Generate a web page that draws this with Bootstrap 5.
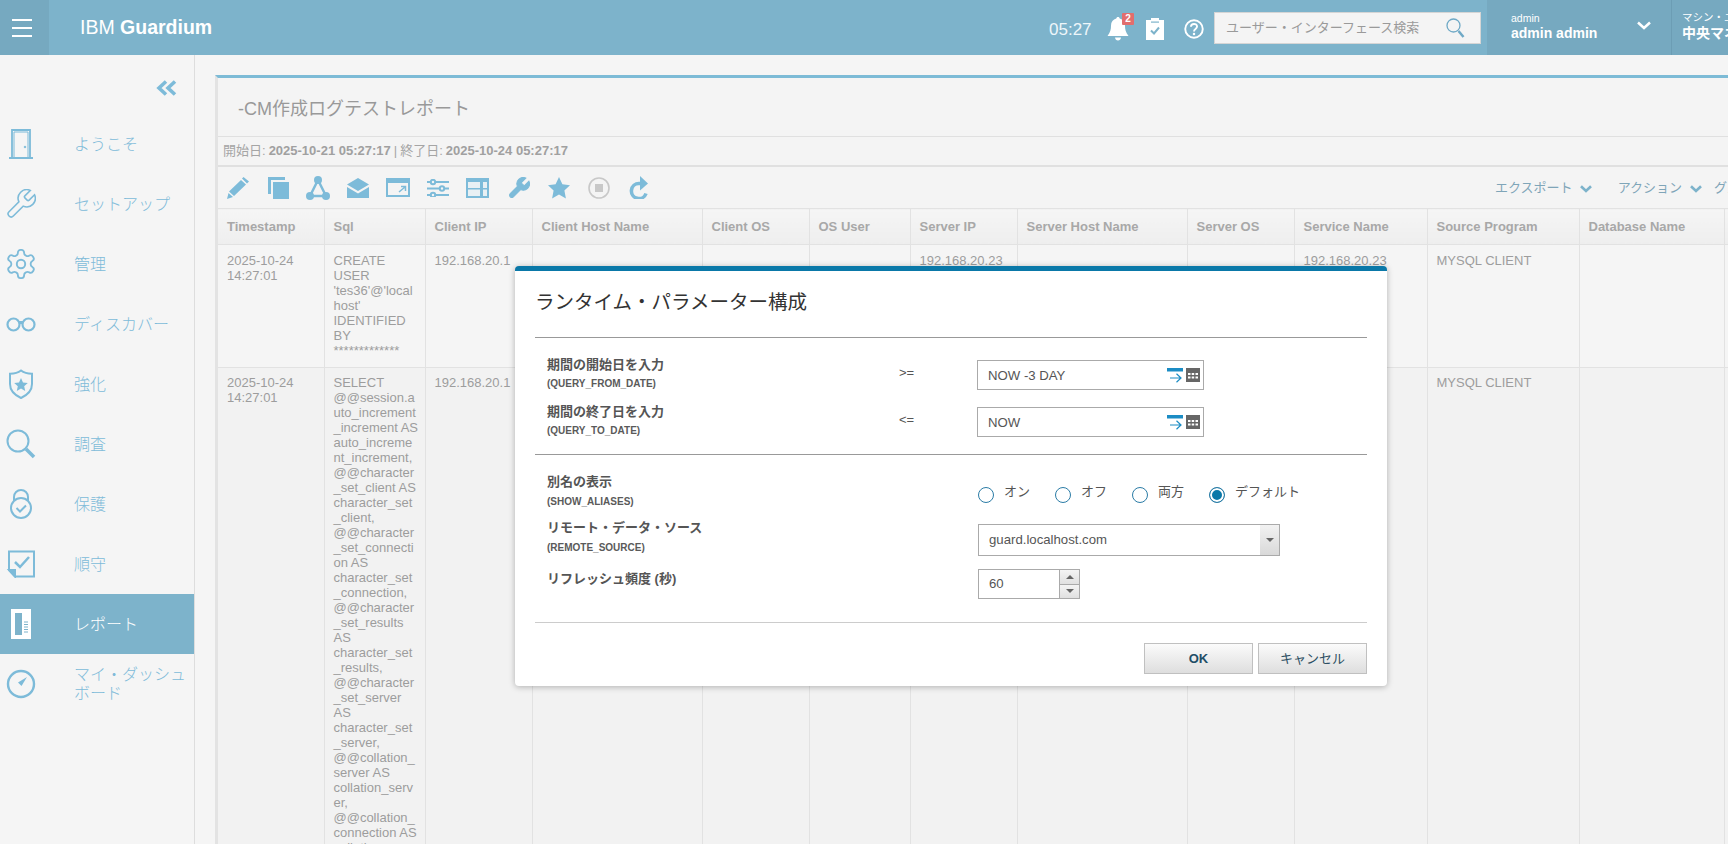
<!DOCTYPE html>
<html lang="ja">
<head>
<meta charset="utf-8">
<title>IBM Guardium</title>
<link href="https://cdn.jsdelivr.net/npm/bootstrap@5.3.0/dist/css/bootstrap.min.css" rel="stylesheet">
<style>
html,body{height:100%;overflow:hidden}
body{font-family:"Liberation Sans","Noto Sans CJK JP",sans-serif;background:#f5f5f5;font-size:13px;color:#999;position:relative;width:1728px;height:844px}
.gd-top{height:55px;background:#7db3cb;padding:0;flex-wrap:nowrap;color:#fff;justify-content:flex-start}
.gd-burger{width:49px;height:55px;background:#76a9c0;border:0;padding:0 12px;display:flex;flex-direction:column;justify-content:center;gap:6px}
.gd-burger span{display:block;height:2px;width:20px;background:#fff}
.gd-brand{margin-left:31px;font-size:19.500px;color:#fff;padding:0;line-height:1}
.gd-clock{margin-left:auto;font-size:17px;width:58px;padding-top:5px;color:#eef6fa}
.gd-bell{position:relative;width:39px;height:24px;margin-top:3px}
.gd-num{position:absolute;left:15px;top:-4px;width:12px;height:12px;background:#e26d6d;color:#fff;font-size:10px;font-weight:700;line-height:12px;text-align:center;border-radius:1px;padding:0}
.gd-clip{margin:3px 20px 0 0}
.gd-help{margin-top:3px}
.gd-search{width:267px;height:32px;margin-left:10px;background:#f4f4f4;border:1px solid #d5d5d5;border-radius:0;padding:0 15px 0 11px;display:flex;align-items:center;justify-content:space-between;color:#9a9a9a;font-size:13px;box-shadow:none}
.gd-user{width:185px;height:55px;margin-left:6px;background:#76a9c0;border-right:1px solid #6c9db4;padding:13px 0 0 24px;position:relative;line-height:1;flex:none}
.gd-user small{display:block;font-size:10.500px;color:#fff}
.gd-user b{display:block;font-size:14px;margin-top:2px;font-weight:700}
.gd-user svg{position:absolute;left:150px;top:21px}
.gd-mach{background:#76a9c0;height:55px;width:56px;flex:none;padding:12px 0 0 10px;white-space:nowrap;overflow:hidden;line-height:1}
.gd-mach small{display:block;font-size:10.500px}
.gd-mach b{display:block;font-size:14px;margin-top:3px}
.gd-main{height:789px;overflow:hidden}
.gd-side{width:195px;flex:none;border-right:1px solid #ddd;background:#f5f5f5;height:789px}
.gd-back{height:59px;padding:25px 17px 0 0;text-align:right;line-height:1}
.gd-side .nav-link{height:60px;padding:0;display:flex;align-items:center;color:#80bbd9;font-size:16px;line-height:19px;font-weight:300}
.gd-side .nav-link.active{background:#7db3cb;color:#fff}
.gd-ico{width:74px;flex:none;padding-left:6px;display:flex}
.gd-content{flex:1;padding:20px 0 0 20px;overflow:hidden;background:#f5f5f5}
.gd-panel{width:1600px;border-top:3px solid #7dbbd6;border-left:3px solid #e3e3e3;background:#f4f4f4;height:790px}
.gd-title{height:59px;border-bottom:1px solid #e0e0e0;padding:4px 0 0 20px;margin:0;font-size:18px;font-weight:400;color:#999;display:flex;align-items:center;line-height:1}
.gd-dates{height:30px;border-bottom:2px solid #e0e0e0;padding:0 0 0 5px;font-size:13px;color:#a5a5a5;display:flex;align-items:center;gap:3px}
.gd-dates b{color:#a0a0a0}
.gd-tools{height:41px;display:flex;align-items:center;position:relative;padding-left:9px}
.gd-tools>svg{flex:none}
.gd-menu{margin-left:847px;display:flex;gap:0;white-space:nowrap;font-size:13px;color:#7fa5b8;align-items:center}
.gd-grid{table-layout:fixed;width:1640px;margin:0;--bs-table-bg:transparent;--bs-table-color:#9d9d9d;--bs-table-border-color:#e2e2e2;font-size:13px;line-height:15px;border-color:#e2e2e2}
.gd-grid th{height:36px;padding:0 6px 0 9px;font-weight:700;color:#a8a8a8;background:linear-gradient(#f5f5f5,#eeeeee);vertical-align:middle;border-width:1px 1px 1px 0}
.gd-grid td{padding:8px 6px 8px 9px;color:#9d9d9d;overflow-wrap:anywhere;border-width:0 1px 0 0;vertical-align:top}
.gd-grid tr.gd-r1 td{height:123px;background:#f5f5f5}
.gd-grid tr.gd-r2 td{background:#f2f2f2;padding-top:7px}
.gd-modal{position:absolute;left:515px;top:266px;width:872px;height:420px;background:#fff;border-top:5px solid #0a78a8;border-radius:4px;box-shadow:0 1px 6px rgba(0,0,0,.28);padding:0 20px;color:#555}
.gd-mh{height:67px;border-bottom:1px solid #999;margin:0;font-size:19.500px;font-weight:400;color:#333;display:flex;align-items:center;padding:0 0 3px 0;line-height:1}
.gd-sec1{height:117px;border-bottom:1px solid #999;padding-top:17px}
.gd-sec2{height:168px;border-bottom:1px solid #ccc;padding-top:18px}
.gd-row{display:flex;align-items:flex-start}
.gd-row.gd-a{height:47px}
.gd-lab{width:442px;flex:none;padding-left:12px;font-weight:700;font-size:13px;line-height:18px;color:#555}
.gd-lab small{display:block;font-size:10px;line-height:14px;margin-top:4px;font-weight:700;color:#5a5a5a}
.gd-sec1 .gd-lab{width:364px;padding-top:1px}
.gd-sec1 .gd-lab small{margin-top:3px}
.gd-op{width:78px;flex:none;padding-top:9px;line-height:18px;font-size:13px;color:#555}
.gd-date{width:227px;height:30px;margin-top:5px;border:1.500px solid #aaa;border-radius:0;padding:1px 3px 0 10px;display:flex;align-items:center;justify-content:space-between;font-size:13.200px;color:#555;background:#fff;line-height:1}
.gd-dt{display:flex;gap:3px;align-items:center;margin-top:-1px}
.gd-radios{display:flex;margin-top:14px}
.gd-radios .form-check{width:77px;padding:0;margin:0;min-height:0;display:flex;align-items:flex-start;gap:10px;white-space:nowrap;font-size:13px;color:#555}
.gd-radios .form-check-input{width:16px;height:16px;margin:0;float:none;border:1.500px solid #2b7ca6;background:#fff;flex:none}
.gd-radios .form-check-input:checked{background-image:none;background-color:#0a78a8;border-color:#2b7ca6;box-shadow:inset 0 0 0 2px #fff}
.gd-radios .form-check-label{line-height:14px;margin-top:-2px}
.gd-sec2 .gd-lab{width:443px}
.gd-combo{width:302px;height:32px;margin-top:5px;border:1.500px solid #aaa;display:flex;align-items:stretch;font-size:13.200px;color:#555}
.gd-combo>div:first-child{flex:1;padding-left:10px;display:flex;align-items:center}
.gd-caret{width:19px;background:linear-gradient(#f2f2f2,#d9d9d9);display:flex;align-items:center;justify-content:center}
.gd-spin{width:102px;height:30px;border:1.500px solid #aaa;display:flex;font-size:13.200px;color:#555}
.gd-spin>div:first-child{flex:1;padding-left:10px;display:flex;align-items:center}
.gd-arrows{width:20px;border-left:1px solid #aaa;display:flex;flex-direction:column}
.gd-arrows span{flex:1;background:linear-gradient(#f4f4f4,#e0e0e0);display:flex;align-items:center;justify-content:center}
.gd-arrows span+span{border-top:1px solid #aaa}
.gd-foot{padding-top:20px;gap:5px}
.gd-btn{width:109px;height:31px;padding:0;border:1.500px solid #c0c0c0;border-radius:0;background:linear-gradient(#fbfbfb,#dedede);font-size:13px;color:#2d4f63;line-height:1}
.gd-btn.gd-ok{font-weight:700;color:#1f4e66}
.gd-rc{height:52px}
.gd-rb{height:51px;padding-top:1px}
.gd-rl{padding-top:1px}
</style>
</head>
<body>
<nav class="navbar gd-top d-flex align-items-center">
  <button class="gd-burger" type="button" aria-label="menu"><span></span><span></span><span></span></button>
  <a class="navbar-brand gd-brand" href="#">IBM <b>Guardium</b></a>
  <div class="gd-clock">05:27</div>
  <div class="gd-bell">
    <svg width="22" height="24" viewBox="0 0 22 24"><path fill="#fff" d="M11 0c1 0 1.600.7 1.700 1.600C16 2.400 18 5 18 8.500c0 4 .6 6.800 3.500 10.500H.5C3.400 15.300 4 12.500 4 8.500 4 5 6 2.400 9.300 1.600 9.400.7 10 0 11 0zM8 20.500h6c-.2 2-1.500 3-3 3s-2.800-1-3-3z"/></svg>
    <span class="badge gd-num">2</span>
  </div>
  <svg class="gd-clip" width="18" height="22" viewBox="0 0 18 22"><path fill="#fff" d="M0 2h5V0h8v2h5v20H0z"/><path fill="#7db3cb" d="M5 3.500h8v1.200H5z"/><path fill="none" stroke="#7db3cb" stroke-width="2" d="M5 12.500l3 3 5-6"/></svg>
  <svg class="gd-help" width="20" height="20" viewBox="0 0 21 21"><circle cx="10.500" cy="10.500" r="9.200" fill="none" stroke="#fff" stroke-width="2"/><path fill="none" stroke="#fff" stroke-width="2" d="M7.300 8.200c0-4 6.400-4 6.400-.2 0 2.500-3.200 2.400-3.200 5"/><circle cx="10.500" cy="15.700" r="1.300" fill="#fff"/></svg>
  <div class="form-control gd-search">ユーザー・インターフェース検索
    <svg width="19" height="20" viewBox="0 0 19 20"><circle cx="7.500" cy="7.500" r="6.500" fill="none" stroke="#6fa9c6" stroke-width="1.300"/><path stroke="#6fa9c6" stroke-width="2.500" d="M12.500 13l5 6"/></svg>
  </div>
  <div class="gd-user"><small>admin</small><b>admin admin</b>
    <svg width="14" height="9" viewBox="0 0 14 9"><path fill="none" stroke="#fff" stroke-width="2.500" d="M1 1.500l6 5.500 6-5.500"/></svg>
  </div>
  <div class="gd-mach"><small>マシン・ユーザー</small><b>中央マネージャー</b></div>
</nav>

<div class="d-flex gd-main">
  <aside class="gd-side">
    <div class="gd-back"><svg width="21" height="16" viewBox="0 0 21 16"><path fill="none" stroke="#7dbbd9" stroke-width="3.600" d="M10 1.500L3 8l7 6.500M19 1.500L12 8l7 6.500"/></svg></div>
    <ul class="nav flex-column">
      <li class="nav-item"><a class="nav-link" href="#"><span class="gd-ico"><svg width="30" height="30" viewBox="0 0 30 30" fill="none" stroke="#7dbbd9"><path stroke-width="1.800" d="M6 29V1h18v28"/><path d="M8 28V3h14v25"/><path stroke-width="2" d="M3 29h24"/><circle cx="19" cy="18" r=".8" fill="#7dbbd9"/></svg></span>ようこそ</a></li>
      <li class="nav-item"><a class="nav-link" href="#"><span class="gd-ico"><svg width="30" height="30" viewBox="1.500 1.500 21 21" fill="none" stroke="#7dbbd9" stroke-width="1.100"><path d="M14.700 6.300a1 1 0 0 0 0 1.400l1.600 1.600a1 1 0 0 0 1.400 0l3.770-3.770a6 6 0 0 1-7.940 7.940l-6.910 6.910a2.120 2.120 0 0 1-3-3l6.910-6.910a6 6 0 0 1 7.940-7.940l-3.760 3.760z"/></svg></span>セットアップ</a></li>
      <li class="nav-item"><a class="nav-link" href="#"><span class="gd-ico"><svg width="30" height="30" viewBox="2 2 20 20" fill="none" stroke="#7dbbd9" stroke-width="1.300"><path d="M12.220 2h-.44a2 2 0 0 0-2 2v.18a2 2 0 0 1-1 1.730l-.43.25a2 2 0 0 1-2 0l-.15-.08a2 2 0 0 0-2.730.73l-.22.38a2 2 0 0 0 .73 2.730l.15.1a2 2 0 0 1 1 1.720v.51a2 2 0 0 1-1 1.740l-.15.09a2 2 0 0 0-.73 2.730l.22.38a2 2 0 0 0 2.730.73l.15-.08a2 2 0 0 1 2 0l.43.25a2 2 0 0 1 1 1.730V20a2 2 0 0 0 2 2h.44a2 2 0 0 0 2-2v-.18a2 2 0 0 1 1-1.730l.43-.25a2 2 0 0 1 2 0l.15.08a2 2 0 0 0 2.730-.73l.22-.39a2 2 0 0 0-.73-2.730l-.15-.08a2 2 0 0 1-1-1.740v-.5a2 2 0 0 1 1-1.740l.15-.09a2 2 0 0 0 .73-2.730l-.22-.38a2 2 0 0 0-2.730-.73l-.15.08a2 2 0 0 1-2 0l-.43-.25a2 2 0 0 1-1-1.730V4a2 2 0 0 0-2-2z" transform="translate(12 12) scale(.94) translate(-12 -12)"/><circle cx="12" cy="12" r="2.800"/></svg></span>管理</a></li>
      <li class="nav-item"><a class="nav-link" href="#"><span class="gd-ico"><svg width="30" height="16" viewBox="0 0 30 16" fill="none" stroke="#7dbbd9" stroke-width="2.200"><circle cx="7.500" cy="8.500" r="6"/><circle cx="22.500" cy="8.500" r="6"/><path stroke-width="3" d="M13 6.500h4"/></svg></span>ディスカバー</a></li>
      <li class="nav-item"><a class="nav-link" href="#"><span class="gd-ico"><svg width="30" height="30" viewBox="0 0 30 30"><path fill="none" stroke="#7dbbd9" stroke-width="2" d="M15 1.500c2.500 2 6.500 3.200 11 3.200V15c0 6-4.500 11-11 14C8.500 26 4 21 4 15V4.700c4.500 0 8.500-1.200 11-3.200z"/><path fill="#7dbbd9" d="M15 9l2 4.500 4.800.5-3.600 3.200 1 4.800L15 19.500 10.800 22l1-4.800L8.200 14l4.800-.5z"/></svg></span>強化</a></li>
      <li class="nav-item"><a class="nav-link" href="#"><span class="gd-ico"><svg width="30" height="30" viewBox="0 0 30 30" fill="none" stroke="#7dbbd9"><circle cx="12" cy="12" r="10.500" stroke-width="2"/><path stroke-width="3.500" d="M20 20l8 8"/></svg></span>調査</a></li>
      <li class="nav-item"><a class="nav-link" href="#"><span class="gd-ico"><svg width="30" height="30" viewBox="0 0 30 30" fill="none" stroke="#7dbbd9" stroke-width="2"><circle cx="15" cy="19" r="10"/><path d="M8 12V8a7 7 0 0 1 14 0v4"/><path d="M10.500 19l3.500 3.500 6-6"/></svg></span>保護</a></li>
      <li class="nav-item"><a class="nav-link" href="#"><span class="gd-ico"><svg width="30" height="28" viewBox="0 0 30 28" fill="none" stroke="#7dbbd9" stroke-width="2"><path d="M3 20V1.500h25v25H9z"/><path d="M3 20h6v6.500z" fill="#7dbbd9"/><path stroke-width="2.500" d="M9 12l5 5 9-10"/></svg></span>順守</a></li>
      <li class="nav-item"><a class="nav-link active" href="#"><span class="gd-ico"><svg width="30" height="30" viewBox="0 0 30 30"><path fill="#fff" d="M5 0h20v30H5z"/><path fill="#7db3cb" d="M9 4h7v22H9z"/><path stroke="#7db3cb" stroke-width="1" d="M18 13h4M18 15.500h4M18 18h4M18 20.500h4M18 23h4"/></svg></span>レポート</a></li>
      <li class="nav-item"><a class="nav-link" href="#"><span class="gd-ico"><svg width="30" height="30" viewBox="0 0 30 30"><circle cx="15" cy="15" r="13" fill="none" stroke="#7dbbd9" stroke-width="2.400"/><path fill="#7dbbd9" d="M21 8l-5.500 9-3.500-3.500z"/></svg></span>マイ・ダッシュボード</a></li>
    </ul>
  </aside>

  <main class="gd-content">
    <section class="gd-panel">
      <h1 class="gd-title">-CM作成ログテストレポート</h1>
      <div class="gd-dates"><span>開始日:</span><b>2025-10-21 05:27:17</b><span>|</span><span>終了日:</span><b>2025-10-24 05:27:17</b></div>
      <div class="gd-tools">
        <svg width="22" height="22" viewBox="0 0 22 22" style="margin-right:19px"><path fill="#7dbbd9" d="M16.500 0L22 4.500l-2 2L15 1.500zM14 3l5 4.500L7 19l-5-4.500zM1.500 16l4.500 4-6 2z"/></svg>
        <svg width="21" height="22" viewBox="0 0 21 22" style="margin-right:17px"><path fill="#7dbbd9" d="M4 0h13v3H3v14H0V0z"/><path fill="#7dbbd9" d="M5 5h16v17H5z"/></svg>
        <svg width="24" height="24" viewBox="0 0 24 24" style="margin-right:17px"><path fill="none" stroke="#7dbbd9" stroke-width="2.500" d="M12 4L4 20h16z"/><circle cx="12" cy="4" r="4" fill="#7dbbd9"/><circle cx="4" cy="20" r="4" fill="#7dbbd9"/><circle cx="20" cy="20" r="4" fill="#7dbbd9"/></svg>
        <svg width="22" height="20" viewBox="0 0 22 20" style="margin-right:17px"><path fill="#7dbbd9" d="M11 0l11 6.500L11 13 0 6.500zM0 9l11 6.500L22 9v11H0z"/></svg>
        <svg width="24" height="19" viewBox="0 0 24 19" style="margin-right:17px"><path fill="none" stroke="#7dbbd9" stroke-width="2" d="M1 1h22v17H1z"/><path fill="#7dbbd9" d="M0 0h24v5H0z"/><path fill="none" stroke="#7dbbd9" stroke-width="1.500" d="M13 14l6-5M15 8.500h4.500V13"/></svg>
        <svg width="22" height="18" viewBox="0 0 22 18" style="margin-right:17px" fill="none" stroke="#7dbbd9" stroke-width="2"><path d="M0 3h22M0 9.500h22M0 16h22"/><circle cx="6" cy="3" r="2.200" fill="#f4f4f4"/><circle cx="15" cy="9.500" r="2.200" fill="#f4f4f4"/><circle cx="6" cy="16" r="2.200" fill="#f4f4f4"/></svg>
        <svg width="23" height="20" viewBox="0 0 23 20" style="margin-right:19px"><path fill="#7dbbd9" d="M0 0h23v20H0z"/><path fill="#e8f0f4" d="M2 4h12v6H2zM2 11.500h12V18H2zM17 4h4v6h-4zM17 11.500h4V18h-4z"/></svg>
        <svg width="22" height="22" viewBox="1.500 1.500 21 21" style="margin-right:18px"><path fill="#7dbbd9" stroke="#7dbbd9" stroke-width="1" d="M14.700 6.300a1 1 0 0 0 0 1.400l1.600 1.600a1 1 0 0 0 1.400 0l3.770-3.770a6 6 0 0 1-7.940 7.940l-6.910 6.910a2.120 2.120 0 0 1-3-3l6.910-6.910a6 6 0 0 1 7.940-7.940l-3.760 3.760z"/></svg>
        <svg width="22" height="22" viewBox="0 0 22 22" style="margin-right:18px"><path fill="#7dbbd9" d="M11 0l3.400 7.300 7.600.9-5.600 5.300 1.500 7.900L11 17.500 4.100 21.400l1.500-7.900L0 8.200l7.600-.9z"/></svg>
        <svg width="22" height="22" viewBox="0 0 22 22" style="margin-right:19px"><circle cx="11" cy="11" r="10" fill="none" stroke="#c8c8c8" stroke-width="1.600"/><path fill="#c8c8c8" d="M7 7h8v8H7z"/></svg>
        <svg width="19" height="23" viewBox="0 0 19 23"><path fill="none" stroke="#7dbbd9" stroke-width="3.600" d="M14 7.500H10a7.500 7.500 0 1 0 7 10"/><path fill="#7dbbd9" d="M11 0l8 7.500-8 7z"/></svg>
        <div class="gd-menu">
          <span>エクスポート</span><svg width="12" height="8" viewBox="0 0 12 8" style="margin:2px 26px 0 7px"><path fill="none" stroke="#7db3cb" stroke-width="2.600" d="M1 1.200l5 4.800 5-4.800"/></svg>
          <span>アクション</span><svg width="12" height="8" viewBox="0 0 12 8" style="margin:2px 12px 0 8px"><path fill="none" stroke="#7db3cb" stroke-width="2.600" d="M1 1.200l5 4.800 5-4.800"/></svg>
          <span>グループ</span>
        </div>
      </div>
      <table class="table table-bordered gd-grid">
        <colgroup><col style="width:106px"><col style="width:101px"><col style="width:107px"><col style="width:170px"><col style="width:107px"><col style="width:101px"><col style="width:107px"><col style="width:170px"><col style="width:107px"><col style="width:133px"><col style="width:152px"><col style="width:145px"><col style="width:134px"></colgroup>
        <thead><tr><th>Timestamp</th><th>Sql</th><th>Client IP</th><th>Client Host Name</th><th>Client OS</th><th>OS User</th><th>Server IP</th><th>Server Host Name</th><th>Server OS</th><th>Service Name</th><th>Source Program</th><th>Database Name</th><th></th></tr></thead>
        <tbody>
          <tr class="gd-r1"><td>2025-10-24 14:27:01</td><td>CREATE USER 'tes36'@'localhost' IDENTIFIED BY *************</td><td>192.168.20.1</td><td></td><td></td><td></td><td>192.168.20.23</td><td></td><td></td><td>192.168.20.23</td><td>MYSQL CLIENT</td><td></td><td></td></tr>
          <tr class="gd-r2"><td>2025-10-24 14:27:01</td><td>SELECT @@session.auto_increment_increment AS auto_increment_increment, @@character_set_client AS character_set_client, @@character_set_connection AS character_set_connection, @@character_set_results AS character_set_results, @@character_set_server AS character_set_server, @@collation_server AS collation_server, @@collation_connection AS collation_connection</td><td>192.168.20.1</td><td></td><td></td><td></td><td>192.168.20.23</td><td></td><td></td><td>192.168.20.23</td><td>MYSQL CLIENT</td><td></td><td></td></tr>
        </tbody>
      </table>
    </section>
  </main>
</div>

<div class="gd-modal" role="dialog">
  <h2 class="gd-mh">ランタイム・パラメーター構成</h2>
  <div class="gd-sec1">
    <div class="gd-row gd-a">
      <div class="gd-lab">期間の開始日を入力<small>(QUERY_FROM_DATE)</small></div>
      <div class="gd-op">&gt;=</div>
      <div class="form-control gd-date">NOW -3 DAY<span class="gd-dt"><svg width="16" height="15" viewBox="0 0 16 15"><path fill="#1b8cc4" d="M0 0h16v3.500H0z"/><path fill="none" stroke="#1b8cc4" stroke-width="1.200" d="M3 10h11M9.500 5.800L14 10l-4.500 4.200"/></svg><svg width="14" height="14" viewBox="0 0 14 14"><path fill="#666" d="M0 0h14v14H0z"/><path fill="#fff" d="M2 5h2.500v2H2zM5.700 5h2.500v2H5.700zM9.500 5H12v2H9.500zM2 8.500h2.500v2H2zM5.700 8.500h2.500v2H5.700zM9.500 8.500H12v2H9.500z"/></svg></span></div>
    </div>
    <div class="gd-row gd-a">
      <div class="gd-lab">期間の終了日を入力<small>(QUERY_TO_DATE)</small></div>
      <div class="gd-op">&lt;=</div>
      <div class="form-control gd-date">NOW<span class="gd-dt"><svg width="16" height="15" viewBox="0 0 16 15"><path fill="#1b8cc4" d="M0 0h16v3.500H0z"/><path fill="none" stroke="#1b8cc4" stroke-width="1.200" d="M3 10h11M9.500 5.800L14 10l-4.500 4.200"/></svg><svg width="14" height="14" viewBox="0 0 14 14"><path fill="#666" d="M0 0h14v14H0z"/><path fill="#fff" d="M2 5h2.500v2H2zM5.700 5h2.500v2H5.700zM9.500 5H12v2H9.500zM2 8.500h2.500v2H2zM5.700 8.500h2.500v2H5.700zM9.500 8.500H12v2H9.500z"/></svg></span></div>
    </div>
  </div>
  <div class="gd-sec2">
    <div class="gd-row" style="height:45px">
      <div class="gd-lab">別名の表示<small>(SHOW_ALIASES)</small></div>
      <div class="gd-radios">
        <div class="form-check"><input class="form-check-input" type="radio" name="al" id="r1"><label class="form-check-label" for="r1">オン</label></div>
        <div class="form-check"><input class="form-check-input" type="radio" name="al" id="r2"><label class="form-check-label" for="r2">オフ</label></div>
        <div class="form-check"><input class="form-check-input" type="radio" name="al" id="r3"><label class="form-check-label" for="r3">両方</label></div>
        <div class="form-check"><input class="form-check-input" type="radio" name="al" id="r4" checked><label class="form-check-label" for="r4">デフォルト</label></div>
      </div>
    </div>
    <div class="gd-row gd-rb">
      <div class="gd-lab">リモート・データ・ソース<small>(REMOTE_SOURCE)</small></div>
      <div class="gd-combo"><div>guard.localhost.com</div><span class="gd-caret"><svg width="8" height="4" viewBox="0 0 8 4"><path fill="#666" d="M0 0h8L4 4z"/></svg></span></div>
    </div>
    <div class="gd-row">
      <div class="gd-lab gd-rl">リフレッシュ頻度 (秒)</div>
      <div class="gd-spin"><div>60</div><div class="gd-arrows"><span><svg width="8" height="4" viewBox="0 0 8 4"><path fill="#666" d="M0 4h8L4 0z"/></svg></span><span><svg width="8" height="4" viewBox="0 0 8 4"><path fill="#666" d="M0 0h8L4 4z"/></svg></span></div></div>
    </div>
  </div>
  <div class="d-flex justify-content-end gd-foot">
    <button type="button" class="btn gd-btn gd-ok">OK</button>
    <button type="button" class="btn gd-btn">キャンセル</button>
  </div>
</div>
<script src="https://cdn.jsdelivr.net/npm/bootstrap@5.3.0/dist/js/bootstrap.bundle.min.js"></script>
</body>
</html>
